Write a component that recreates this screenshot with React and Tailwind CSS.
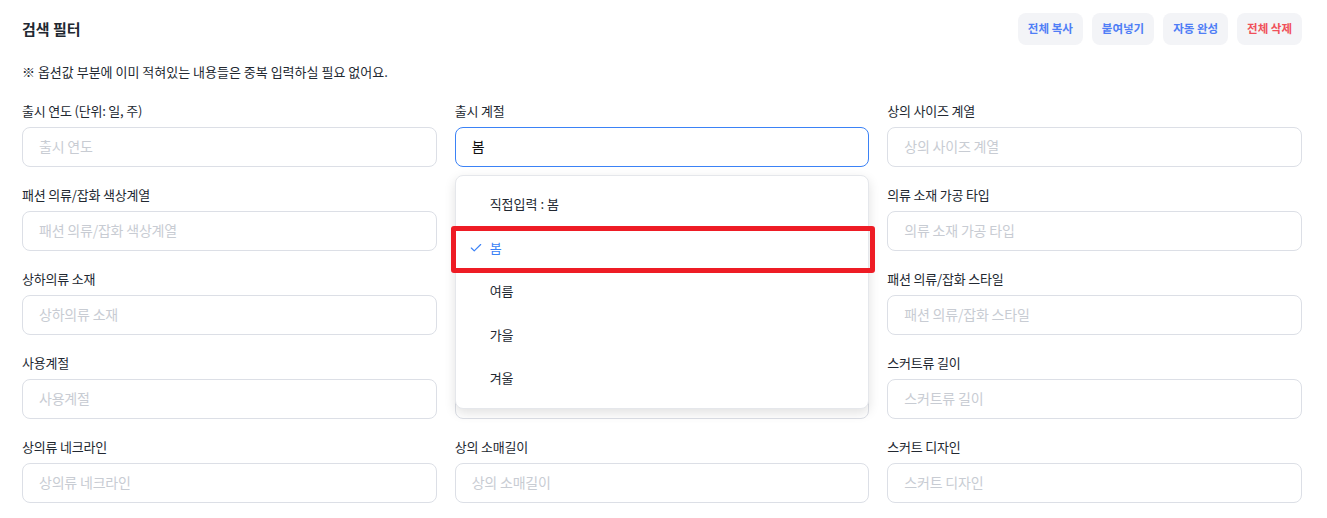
import React from "react";
import { Check } from "lucide-react";

const font = { fontFamily: '"Noto Sans CJK KR", "Noto Sans", sans-serif' };

function Field({ label, placeholder, value, focused, hidden, children }) {
  return (
    <div className="relative flex flex-col">
      <div className={"h-[18px] text-[13px] leading-[18px] text-[#222831] mb-[7px] tracking-[-0.2px]" + (hidden ? " invisible" : "")}>{label}</div>
      <div
        className={
          "h-10 rounded-lg border bg-white flex items-center px-4 text-[14px] pb-[2px] " +
          (focused ? "border-[#3b82f6]" : "border-[#dcdfe6]")
        }
      >
        {value ? (
          <span className="text-[#111]">{value}</span>
        ) : (
          <span className={"text-[#c8ccd3] tracking-[-0.2px]" + (hidden ? " invisible" : "")}>{placeholder}</span>
        )}
      </div>
      {children}
    </div>
  );
}

function Dropdown() {
  const items = ["직접입력 : 봄", "봄", "여름", "가을", "겨울"];
  return (
    <div className="absolute left-0 right-0 top-[73px] z-10 rounded-lg border border-[#e5e7eb] bg-white pt-[6px] pb-[8px] shadow-[0_4px_12px_rgba(0,0,0,0.12)]">
      {items.map((it, i) => (
        <div key={i} className="relative h-[43.5px] flex items-center pl-[34px] text-[13px]">
          {i === 1 && (
            <>
              <Check className="absolute left-[13px] top-[15px] text-[#3b82f6]" size={14} strokeWidth={2} />
              <div className="absolute left-[-5px] right-[-7px] top-0 bottom-[-4px] border-[5px] border-[#ee1c25] rounded-[3px]" />
            </>
          )}
          <span className={i === 1 ? "text-[#3b82f6]" : "text-[#222831]"}>{it}</span>
        </div>
      ))}
    </div>
  );
}

export default function App() {
  const rows = [
    [
      { label: "출시 연도 (단위: 일, 주)", placeholder: "출시 연도" },
      { label: "출시 계절", value: "봄", focused: true, dropdown: true },
      { label: "상의 사이즈 계열", placeholder: "상의 사이즈 계열" },
    ],
    [
      { label: "패션 의류/잡화 색상계열", placeholder: "패션 의류/잡화 색상계열" },
      { label: "패션 의류/잡화 소재", placeholder: "패션 의류/잡화 소재", hidden: true },
      { label: "의류 소재 가공 타입", placeholder: "의류 소재 가공 타입" },
    ],
    [
      { label: "상하의류 소재", placeholder: "상하의류 소재" },
      { label: "패션 의류/잡화 패턴", placeholder: "패션 의류/잡화 패턴", hidden: true },
      { label: "패션 의류/잡화 스타일", placeholder: "패션 의류/잡화 스타일" },
    ],
    [
      { label: "사용계절", placeholder: "사용계절" },
      { label: "하의류 길이", placeholder: "하의류 길이", hidden: true },
      { label: "스커트류 길이", placeholder: "스커트류 길이" },
    ],
    [
      { label: "상의류 네크라인", placeholder: "상의류 네크라인" },
      { label: "상의 소매길이", placeholder: "상의 소매길이" },
      { label: "스커트 디자인", placeholder: "스커트 디자인" },
    ],
  ];
  const fields = rows.flat();
  return (
    <div style={font} className="w-[1327px] h-[518px] bg-white pl-[22px] pr-[25px] pt-[13px] overflow-hidden">
      <div className="flex items-center justify-between h-8">
        <div className="text-[15px] font-bold text-[#222831]">검색 필터</div>
        <div className="flex gap-[9px] text-[11.5px] font-semibold">
          <button className="h-8 px-[10px] rounded-lg bg-[#f3f4f7] text-[#4f7ef6]">전체 복사</button>
          <button className="h-8 px-[10px] rounded-lg bg-[#f3f4f7] text-[#4f7ef6]">붙여넣기</button>
          <button className="h-8 px-[10px] rounded-lg bg-[#f3f4f7] text-[#4f7ef6]">자동 완성</button>
          <button className="h-8 px-[10px] rounded-lg bg-[#f3f4f7] text-[#f0505a]">전체 삭제</button>
        </div>
      </div>
      <div className="mt-[17px] h-5 leading-5 text-[13px] text-[#222831]">
        ※ 옵션값 부분에 이미 적혀있는 내용들은 중복 입력하실 필요 없어요.
      </div>
      <div className="mt-5 grid grid-cols-3 gap-x-[18px] gap-y-[19px]">
        {fields.map((f, i) => (
          <Field key={i} label={f.label} placeholder={f.placeholder} value={f.value} focused={f.focused} hidden={f.hidden}>
            {f.dropdown && <Dropdown />}
          </Field>
        ))}
      </div>
    </div>
  );
}
